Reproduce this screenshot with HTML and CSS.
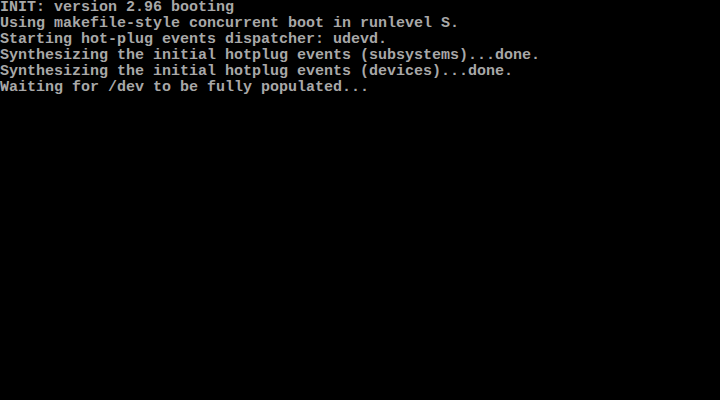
FILE: index.html
```html
<!DOCTYPE html>
<html>
<head>
<meta charset="utf-8">
<link rel="stylesheet" href="styles.css">
</head>
<body>
<pre class="console">INIT: version 2.96 booting
Using makefile-style concurrent boot in runlevel S.
Starting hot-plug events dispatcher: udevd.
Synthesizing the initial hotplug events (subsystems)...done.
Synthesizing the initial hotplug events (devices)...done.
Waiting for /dev to be fully populated...</pre>
</body>
</html>
```
FILE: styles.css
```css
html, body {
  margin: 0;
  padding: 0;
  background: #000;
  width: 720px;
  height: 400px;
  overflow: hidden;
}
.console {
  margin: 0;
  padding: 0;
  font-family: "Liberation Mono", "DejaVu Sans Mono", monospace;
  font-size: 15px;
  font-weight: bold;
  line-height: 16px;
  color: #a8a8a8;
  white-space: pre;
}
```
